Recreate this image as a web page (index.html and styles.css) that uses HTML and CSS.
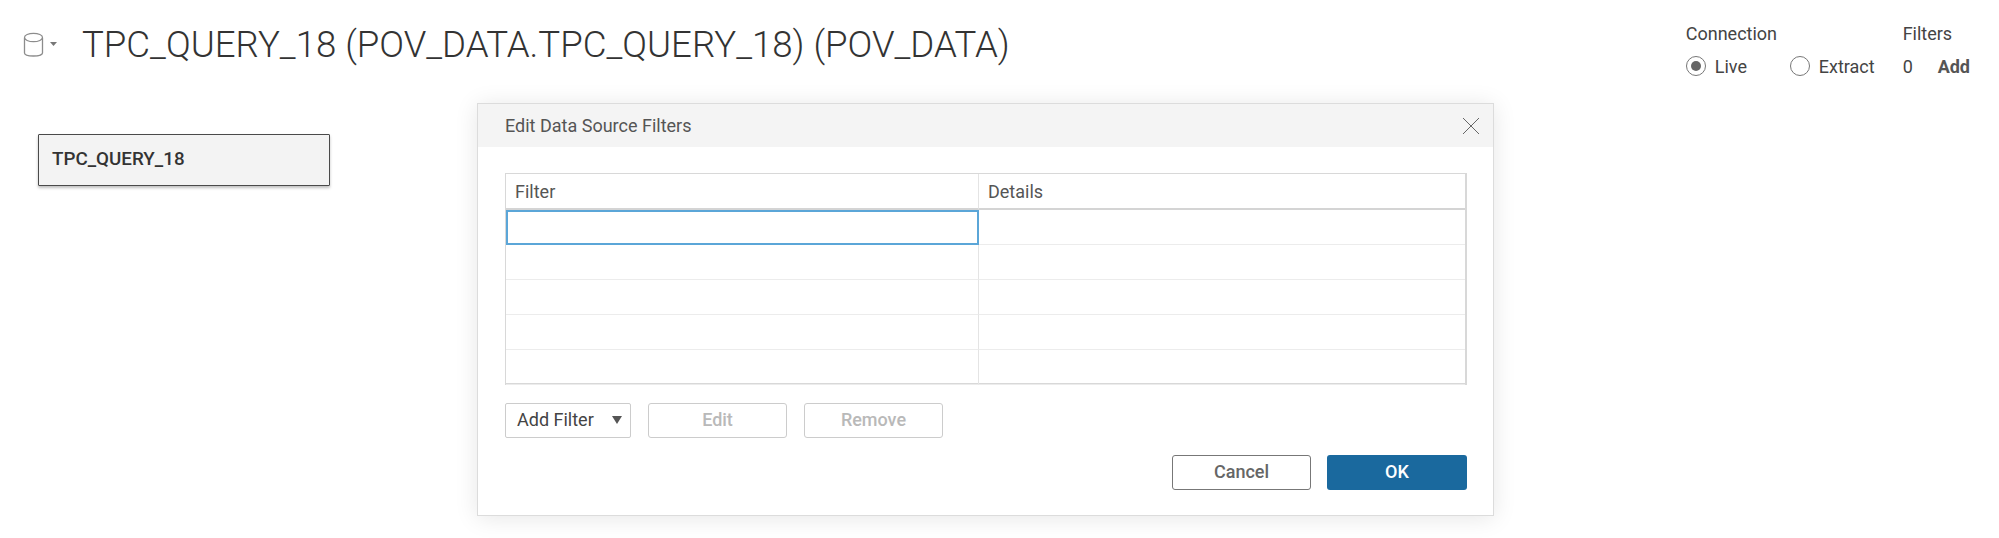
FILE: index.html
```html
<!DOCTYPE html>
<html lang="en">
<head>
<meta charset="utf-8">
<title>Edit Data Source Filters</title>
<link rel="stylesheet" href="styles.css">
</head>
<body>
<div class="page">
  <header class="top">
    <div class="source">
      <svg class="db" width="21" height="26" viewBox="0 0 21 26" fill="none" stroke="#8c8c8c" stroke-width="1.3">
        <path d="M1.500 6v15c0 4 18 4 18 0V6"/>
        <ellipse cx="10.500" cy="5.500" rx="9" ry="4.200"/>
      </svg>
      <svg class="caret" width="7" height="4" viewBox="0 0 7 4"><path d="M0 0h7L3.500 4z" fill="#777"/></svg>
      <h1 class="title">TPC_QUERY_18 (POV_DATA.TPC_QUERY_18) (POV_DATA)</h1>
    </div>
    <div class="options">
      <div class="opt conn">
        <div class="opt-label">Connection</div>
        <div class="opt-row">
          <span class="radio on"></span><span class="radio-text live">Live</span>
          <span class="radio"></span><span class="radio-text">Extract</span>
        </div>
      </div>
      <div class="opt">
        <div class="opt-label">Filters</div>
        <div class="opt-row"><span class="count">0</span><span class="add">Add</span></div>
      </div>
    </div>
  </header>
  <div class="node">TPC_QUERY_18</div>

  <section class="dialog">
    <div class="dialog-head">
      <span>Edit Data Source Filters</span>
      <svg class="close" width="18" height="18" viewBox="0 0 18 18" stroke="#666" stroke-width="1" fill="none"><path d="M1 1l16 16M17 1L1 17"/></svg>
    </div>
    <div class="dialog-body">
      <div class="grid">
        <div class="cell head">Filter</div><div class="cell head">Details</div>
        <div class="cell selected"></div><div class="cell"></div>
        <div class="cell"></div><div class="cell"></div>
        <div class="cell"></div><div class="cell"></div>
        <div class="cell"></div><div class="cell"></div>
        <div class="cell"></div><div class="cell"></div>
      </div>
      <div class="actions">
        <div class="select">Add Filter<svg width="14" height="8" viewBox="0 0 14 8"><path d="M2 0h10L7 8z" fill="#555"/></svg></div>
        <button class="btn disabled">Edit</button>
        <button class="btn disabled">Remove</button>
      </div>
      <div class="footer">
        <button class="btn cancel">Cancel</button>
        <button class="btn ok">OK</button>
      </div>
    </div>
  </section>
</div>
</body>
</html>
```
FILE: styles.css
```css
* { box-sizing: border-box; }
html, body { margin: 0; padding: 0; background: #fff; }
body { font-family: "Roboto", "Liberation Sans", sans-serif; color: #333; }
.page { position: relative; width: 1999px; height: 538px; overflow: hidden; }

.top { display: flex; justify-content: space-between; padding: 23px 29px 0 23px; height: 134px; }
.source { display: flex; align-items: flex-start; }
.db { margin-top: 9px; }
.caret { margin: 19px 0 0 6px; }
.title { margin: 0 0 0 25px; font-size: 36.600px; line-height: 44px; font-weight: 300; color: #333; white-space: nowrap; }

.options { display: flex; gap: 28px; font-size: 18px; color: #444; }
.opt-label { line-height: 24px; height: 24px; margin-top: -1px; }
.opt-row { display: flex; align-items: center; margin-top: 8px; height: 24px; }
.radio { width: 20px; height: 20px; border: 1.5px solid #777; border-radius: 50%; display: flex; align-items: center; justify-content: center; background: #fff; }
.radio.on::after { content: ""; width: 10px; height: 10px; border-radius: 50%; background: #666; }
.radio-text { margin-left: 9px; }
.radio-text.live { width: 75px; }
.count { width: 35px; }
.add { font-weight: 700; color: #555; }

.node { width: 292px; height: 52px; margin-left: 38px; padding: 0 0 2px 13px; display: flex; align-items: center; background: #f3f3f3; border: 1px solid #4a4a4a; border-radius: 1px; box-shadow: 0 2px 3px rgba(0,0,0,.25); font-size: 18.800px; font-weight: 500; color: #333; }

.dialog { position: absolute; left: 477px; top: 103px; width: 1017px; height: 413px; background: #fff; border: 1px solid #dcdcdc; box-shadow: 0 2px 22px rgba(0,0,0,.1); }
.dialog-head { height: 43px; background: #f4f4f4; padding: 0 13px 0 27px; display: flex; align-items: center; justify-content: space-between; font-size: 18px; color: #555; }
.dialog-body { padding: 26px 26px 0 27px; }

.grid { display: grid; grid-template-columns: 473px 1fr; grid-template-rows: 36px repeat(5, 35px); height: 212px; border: 2px solid #d8d8d8; border-left-width: 1px; border-top-width: 1px; }
.cell { border-right: 1px solid #e4e4e4; border-bottom: 1px solid #ececec; font-size: 18px; color: #555; padding: 0 0 0 9px; display: flex; align-items: center; }
.cell:nth-child(2n) { border-right: 0; }
.cell.head { border-bottom: 2px solid #d4d4d4; }
.cell.selected { border: 2px solid #5ba6d8; }

.actions { display: flex; gap: 17px; margin-top: 18px; }
.select { width: 126px; height: 35px; border: 1px solid #ccc; border-radius: 2px; display: flex; align-items: center; justify-content: space-between; padding: 0 6px 2px 11px; font-size: 18px; color: #444; }
.btn { width: 139px; height: 35px; border-radius: 3px; background: #fff; font-family: inherit; font-size: 18px; padding: 0 0 2px; }
.btn.disabled { border: 1.5px solid #ccc; color: #b9b9b9; font-weight: 500; }
.footer { display: flex; justify-content: flex-end; gap: 16px; margin-top: 17px; }
.btn.cancel { border: 1.5px solid #777; color: #666; font-weight: 500; }
.btn.ok { width: 140px; border: 0; background: #1a699e; color: #fff; font-weight: 500; }
```
